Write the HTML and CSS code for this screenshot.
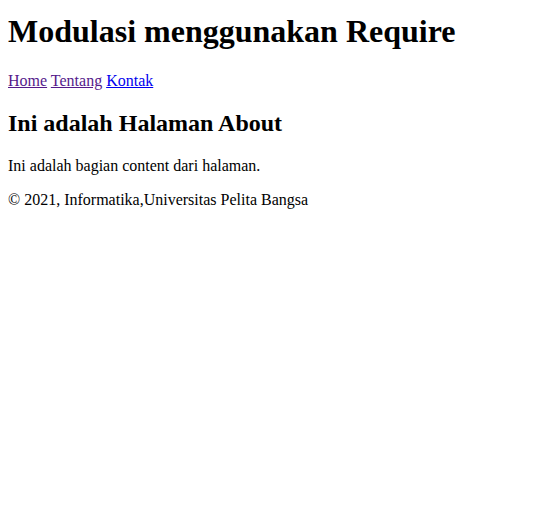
FILE: index.html
```html
<!DOCTYPE html>
<html>
<head>
<meta charset="utf-8">
<title>Modulasi</title>
<link rel="stylesheet" href="styles.css">
</head>
<body>
<h1 class="title">Modulasi menggunakan Require</h1>
<nav class="nav"><a class="visited" href="#home">Home</a> <a class="visited" href="#tentang">Tentang</a> <a class="link" href="#kontak">Kontak</a></nav>
<h2 class="subtitle">Ini adalah Halaman About</h2>
<p class="content">Ini adalah bagian content dari halaman.</p>
<footer class="footer">© 2021, Informatika,Universitas Pelita Bangsa</footer>
</body>
</html>
```
FILE: styles.css
```css
body {
  margin: 0 8px 8px;
  font-family: "Liberation Serif", "Times New Roman", serif;
  font-size: 16px;
  color: #000;
  background: #fff;
}
.title { font-size: 32px; margin: 13.44px 0 21.44px; font-weight: bold; }
.nav { margin: 0; }
.visited { color: #551a8b; }
.link { color: #0000ee; }
.subtitle { font-size: 24px; margin: 19.92px 0; font-weight: bold; }
.content { margin: 16px 0; }
.footer { margin: 0; }
```
